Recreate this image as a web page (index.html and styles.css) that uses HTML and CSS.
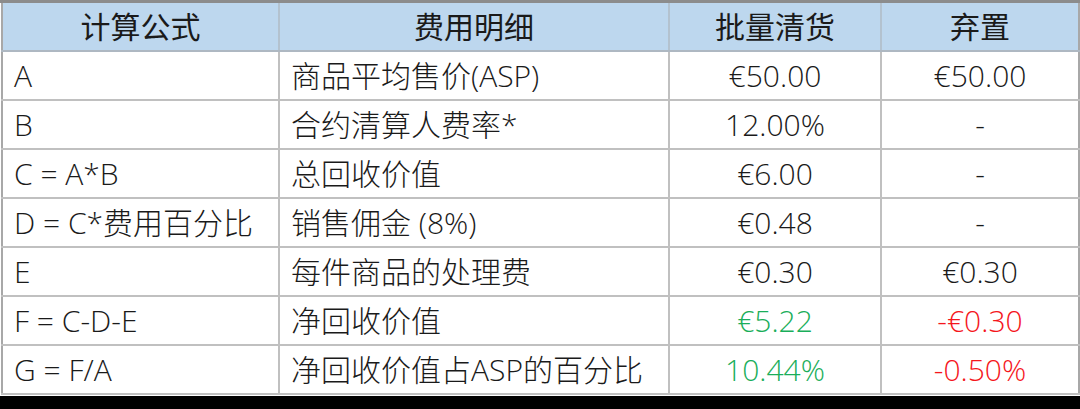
FILE: index.html
```html
<!DOCTYPE html>
<html lang="zh-CN">
<head>
<meta charset="utf-8">
<link rel="stylesheet" href="styles.css">
</head>
<body>
<div class="frame">
<table class="fee">
  <colgroup>
    <col class="c1"><col class="c2"><col class="c3"><col class="c4">
  </colgroup>
  <thead>
    <tr><th>计算公式</th><th>费用明细</th><th>批量清货</th><th>弃置</th></tr>
  </thead>
  <tbody>
    <tr><td>A</td><td>商品平均售价(ASP)</td><td class="num">€50.00</td><td class="num">€50.00</td></tr>
    <tr><td>B</td><td>合约清算人费率*</td><td class="num">12.00%</td><td class="num">-</td></tr>
    <tr><td>C = A*B</td><td>总回收价值</td><td class="num">€6.00</td><td class="num">-</td></tr>
    <tr><td>D = C*费用百分比</td><td>销售佣金 (8%)</td><td class="num">€0.48</td><td class="num">-</td></tr>
    <tr><td>E</td><td>每件商品的处理费</td><td class="num">€0.30</td><td class="num">€0.30</td></tr>
    <tr><td>F = C-D-E</td><td>净回收价值</td><td class="num pos">€5.22</td><td class="num neg">-€0.30</td></tr>
    <tr><td>G = F/A</td><td>净回收价值占ASP的百分比</td><td class="num pos">10.44%</td><td class="num neg">-0.50%</td></tr>
  </tbody>
</table>
</div>
</body>
</html>
```
FILE: styles.css
```css
html, body {
  margin: 0;
  padding: 0;
  background: #000;
  width: 1080px;
  height: 409px;
  overflow: hidden;
}
.frame {
  width: 1080px;
  height: 396px;
  background: #fff;
  border-top: 3px solid #8c8c8c;
  box-sizing: border-box;
  padding: 0 2px 0 1px;
}
.fee {
  border-collapse: collapse;
  width: 1077px;
  table-layout: fixed;
  font-family: "Open Sans", "Noto Sans CJK SC", sans-serif;
  font-weight: 300;
  font-size: 30px;
  color: #1a1a1a;
}
.c1 { width: 277px; }
.c2 { width: 390px; }
.c3 { width: 212px; }
.c4 { width: 198px; }
.fee th, .fee td {
  border: 2px solid #c0c0c0;
  height: 47px;
  padding: 0 0 0 11px;
  line-height: 1;
  white-space: nowrap;
  overflow: hidden;
}
.fee th {
  background: #bdd7ee;
  font-weight: 400;
  text-align: center;
  padding: 0;
  border-top: none;
  border-color: #b3c2cf;
  border-bottom-color: #aeb8c2;
}
.fee tr > :first-child { border-left-color: #a8a8a8; }
.fee tr > :last-child { border-right-color: #a8a8a8; }
.fee td.num {
  text-align: center;
  padding: 0;
}
.fee td.pos { color: #1aae5a; }
.fee td.neg { color: #f5161c; }
```
